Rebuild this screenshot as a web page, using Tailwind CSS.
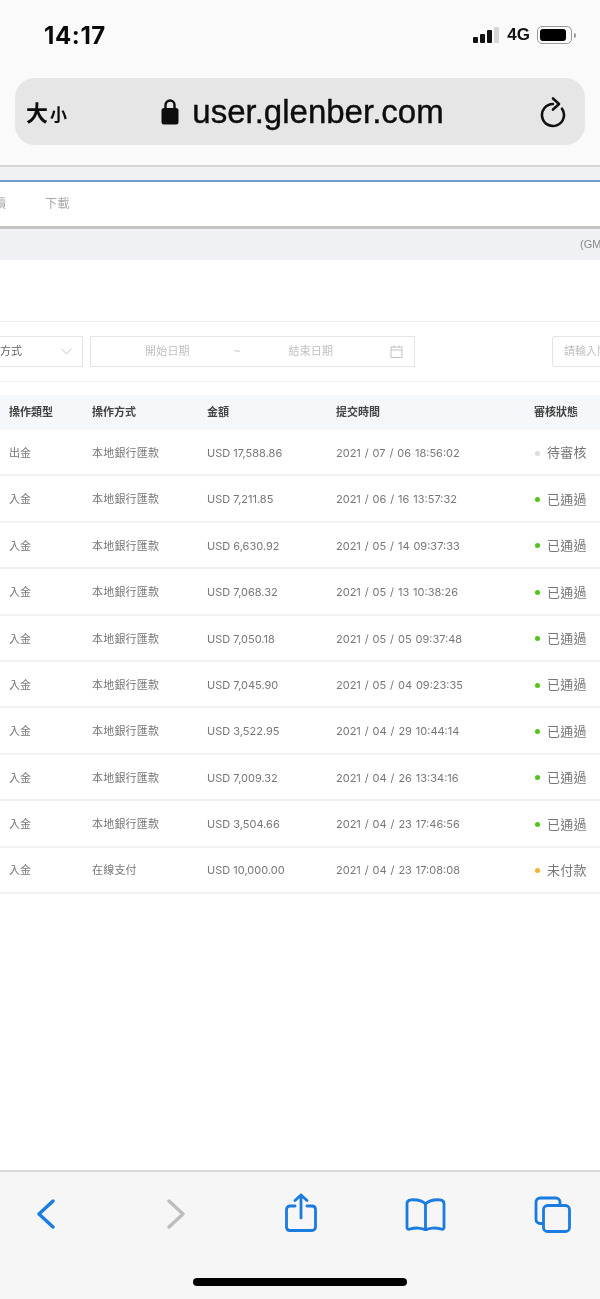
<!doctype html>
<html lang="zh-Hant"><head><meta charset="utf-8"><script src="https://cdn.jsdelivr.net/npm/@tailwindcss/browser@4"></script></head>
<body class="m-0 bg-white">
<div class="w-[600px] h-[1299px] overflow-hidden flex flex-col bg-white blur-[0.35px] font-['Liberation_Sans','Noto_Sans_CJK_TC',sans-serif]">
  <!-- Browser chrome -->
  <div class="h-[165px] shrink-0 bg-[#fafafa] flex flex-col">
    <div class="h-[78px] flex items-start justify-between pl-[44px] pr-[24px] pt-[23px]">
      <span class="text-[24px] leading-[26px] font-bold text-[#0a0a0a] tracking-[0.6px] font-['Inter','Liberation_Sans',sans-serif]">14:17</span>
      <div class="flex items-center pt-[3px]">
        <div class="flex items-end gap-[2px] h-[16px]">
          <span class="w-[5px] h-[6px] rounded-[1px] bg-[#111]"></span>
          <span class="w-[5px] h-[9px] rounded-[1px] bg-[#111]"></span>
          <span class="w-[5px] h-[13px] rounded-[1px] bg-[#111]"></span>
          <span class="w-[5px] h-[16px] rounded-[1px] bg-[#d6d6d6]"></span>
        </div>
        <span class="ml-[8px] text-[17px] leading-[18px] font-bold text-[#111]">4G</span>
        <div class="ml-[7px] flex items-center gap-[2px]">
          <div class="w-[35px] h-[18px] rounded-[5px] border border-[#9a9a9a] p-[2px]"><div class="w-[26px] h-full rounded-[3px] bg-black"></div></div>
          <span class="w-[2px] h-[5px] rounded-r-[2px] bg-[#9a9a9a]"></span>
        </div>
      </div>
    </div>
    <div class="mx-[15px] h-[67px] rounded-[20px] bg-[#e6e6e6] flex items-center relative">
      <div class="absolute left-[11px] top-[18px] flex items-baseline text-[#0d0d0d] font-bold font-['Noto_Sans_CJK_TC',sans-serif]">
        <span class="text-[22px] leading-[30px]">大</span><span class="text-[17px] leading-[30px] ml-[2px]">小</span>
      </div>
      <div class="w-full flex items-center justify-center gap-[13px] pl-[5px]">
        <svg width="18" height="27" viewBox="0 0 18 27"><path d="M4.500 11V7a4.500 4.500 0 0 1 9 0v4" fill="none" stroke="#0d0d0d" stroke-width="2.400"/><rect x="0.500" y="10" width="17" height="16.500" rx="2.500" fill="#0d0d0d"/></svg>
        <span class="text-[33px] leading-[38px] text-[#0d0d0d] [-webkit-text-stroke:0.4px_#0d0d0d]">user.glenber.com</span>
      </div>
      <svg class="absolute right-[19px] top-[18px]" width="26" height="32" viewBox="0 0 26 32" fill="none" stroke="#111" stroke-width="2.600" stroke-linecap="round" stroke-linejoin="round"><path d="M13 8A11 11 0 1 0 22 12.700"/><path d="M13 2.500l6 5.500-6 5.500"/></svg>
    </div>
  </div>
  <div class="h-[2px] shrink-0 bg-[#d6d6d6]"></div>
  <div class="h-[13px] shrink-0 bg-[#f0f1f5]"></div>
  <div class="h-[2px] shrink-0 bg-[#6f9fc8]"></div>
  <!-- Site nav -->
  <div class="h-[44px] shrink-0 bg-white flex items-center text-[12px] text-[#a8a8a8]">
    <span class="ml-[-6px]">贖</span><span class="ml-[39px] tracking-[0.5px]">下載</span>
  </div>
  <div class="h-[3px] shrink-0 bg-[#c4c4c4]"></div>
  <div class="h-[31px] shrink-0 bg-[#f0f1f5] flex items-center justify-end text-[11px] text-[#888] overflow-hidden">
    <span class="w-[20px] whitespace-nowrap">(GMT</span>
  </div>
  <!-- Filters -->
  <div class="h-[61px] shrink-0 bg-white"></div>
  <div class="h-[61px] shrink-0 border-y border-[#efefef] flex items-center">
    <div class="w-[83px] shrink-0 h-[31px] border border-l-0 border-[#e4e4e4] flex items-center justify-between pr-[10px] text-[11px] text-[#666]">
      <span>方式</span>
      <svg width="11" height="7" viewBox="0 0 11 7" fill="none" stroke="#c8c8c8" stroke-width="1"><path d="M0.500 0.500L5.500 6l5-5.500"/></svg>
    </div>
    <div class="ml-[7px] w-[325px] shrink-0 h-[31px] border border-[#e4e4e4] flex items-center text-[11px] text-[#c0c0c0] tracking-[0.2px]">
      <span class="ml-[54px]">開始日期</span>
      <span class="ml-[44px]">~</span>
      <span class="ml-[48px]">結束日期</span>
      <svg class="ml-[57px]" width="13" height="13" viewBox="0 0 13 13" fill="none" stroke="#c4c4c4" stroke-width="1"><rect x="1" y="2" width="11" height="10.500"/><path d="M1 5h11M4 0.500v2.500M9 0.500v2.500"/></svg>
    </div>
    <div class="ml-[137px] w-[60px] shrink-0 h-[31px] border border-[#e4e4e4] rounded-l-[2px] flex items-center pl-[11px] text-[11px] text-[#c0c0c0] whitespace-nowrap">請輸入關鍵字</div>
  </div>
  <!-- Table -->
  <div class="h-[13px] shrink-0"></div>
  <div class="h-[35px] shrink-0 bg-[#f5f8fa] grid grid-cols-[83px_115px_129px_198px_1fr] pl-[9px] items-center text-[11px] font-bold text-[#444]">
    <span>操作類型</span><span>操作方式</span><span>金額</span><span>提交時間</span><span>審核狀態</span>
  </div>
  <div class="text-[11px] text-[#777]">
    <div class="h-[46.4px] pt-[2px] border-b-2 border-[#f2f2f2] grid grid-cols-[83px_115px_129px_198px_1fr] pl-[9px] items-center"><span>出金</span><span class="tracking-[0.2px]">本地銀行匯款</span><span class="font-['Inter','Liberation_Sans',sans-serif]">USD 17,588.86</span><span class="[word-spacing:0.8px] font-['Inter','Liberation_Sans',sans-serif]">2021 / 07 / 06 18:56:02</span><span class="flex items-center text-[13px] tracking-[0.3px]"><i class="w-[5px] h-[5px] rounded-full bg-[#dddddd] ml-[1px] mr-[7px]"></i>待審核</span></div>
    <div class="h-[46.4px] pt-[2px] border-b-2 border-[#f2f2f2] grid grid-cols-[83px_115px_129px_198px_1fr] pl-[9px] items-center"><span>入金</span><span class="tracking-[0.2px]">本地銀行匯款</span><span class="font-['Inter','Liberation_Sans',sans-serif]">USD 7,211.85</span><span class="[word-spacing:0.8px] font-['Inter','Liberation_Sans',sans-serif]">2021 / 06 / 16 13:57:32</span><span class="flex items-center text-[13px] tracking-[0.3px]"><i class="w-[5px] h-[5px] rounded-full bg-[#52c41a] ml-[1px] mr-[7px]"></i>已通過</span></div>
    <div class="h-[46.4px] pt-[2px] border-b-2 border-[#f2f2f2] grid grid-cols-[83px_115px_129px_198px_1fr] pl-[9px] items-center"><span>入金</span><span class="tracking-[0.2px]">本地銀行匯款</span><span class="font-['Inter','Liberation_Sans',sans-serif]">USD 6,630.92</span><span class="[word-spacing:0.8px] font-['Inter','Liberation_Sans',sans-serif]">2021 / 05 / 14 09:37:33</span><span class="flex items-center text-[13px] tracking-[0.3px]"><i class="w-[5px] h-[5px] rounded-full bg-[#52c41a] ml-[1px] mr-[7px]"></i>已通過</span></div>
    <div class="h-[46.4px] pt-[2px] border-b-2 border-[#f2f2f2] grid grid-cols-[83px_115px_129px_198px_1fr] pl-[9px] items-center"><span>入金</span><span class="tracking-[0.2px]">本地銀行匯款</span><span class="font-['Inter','Liberation_Sans',sans-serif]">USD 7,068.32</span><span class="[word-spacing:0.8px] font-['Inter','Liberation_Sans',sans-serif]">2021 / 05 / 13 10:38:26</span><span class="flex items-center text-[13px] tracking-[0.3px]"><i class="w-[5px] h-[5px] rounded-full bg-[#52c41a] ml-[1px] mr-[7px]"></i>已通過</span></div>
    <div class="h-[46.4px] pt-[2px] border-b-2 border-[#f2f2f2] grid grid-cols-[83px_115px_129px_198px_1fr] pl-[9px] items-center"><span>入金</span><span class="tracking-[0.2px]">本地銀行匯款</span><span class="font-['Inter','Liberation_Sans',sans-serif]">USD 7,050.18</span><span class="[word-spacing:0.8px] font-['Inter','Liberation_Sans',sans-serif]">2021 / 05 / 05 09:37:48</span><span class="flex items-center text-[13px] tracking-[0.3px]"><i class="w-[5px] h-[5px] rounded-full bg-[#52c41a] ml-[1px] mr-[7px]"></i>已通過</span></div>
    <div class="h-[46.4px] pt-[2px] border-b-2 border-[#f2f2f2] grid grid-cols-[83px_115px_129px_198px_1fr] pl-[9px] items-center"><span>入金</span><span class="tracking-[0.2px]">本地銀行匯款</span><span class="font-['Inter','Liberation_Sans',sans-serif]">USD 7,045.90</span><span class="[word-spacing:0.8px] font-['Inter','Liberation_Sans',sans-serif]">2021 / 05 / 04 09:23:35</span><span class="flex items-center text-[13px] tracking-[0.3px]"><i class="w-[5px] h-[5px] rounded-full bg-[#52c41a] ml-[1px] mr-[7px]"></i>已通過</span></div>
    <div class="h-[46.4px] pt-[2px] border-b-2 border-[#f2f2f2] grid grid-cols-[83px_115px_129px_198px_1fr] pl-[9px] items-center"><span>入金</span><span class="tracking-[0.2px]">本地銀行匯款</span><span class="font-['Inter','Liberation_Sans',sans-serif]">USD 3,522.95</span><span class="[word-spacing:0.8px] font-['Inter','Liberation_Sans',sans-serif]">2021 / 04 / 29 10:44:14</span><span class="flex items-center text-[13px] tracking-[0.3px]"><i class="w-[5px] h-[5px] rounded-full bg-[#52c41a] ml-[1px] mr-[7px]"></i>已通過</span></div>
    <div class="h-[46.4px] pt-[2px] border-b-2 border-[#f2f2f2] grid grid-cols-[83px_115px_129px_198px_1fr] pl-[9px] items-center"><span>入金</span><span class="tracking-[0.2px]">本地銀行匯款</span><span class="font-['Inter','Liberation_Sans',sans-serif]">USD 7,009.32</span><span class="[word-spacing:0.8px] font-['Inter','Liberation_Sans',sans-serif]">2021 / 04 / 26 13:34:16</span><span class="flex items-center text-[13px] tracking-[0.3px]"><i class="w-[5px] h-[5px] rounded-full bg-[#52c41a] ml-[1px] mr-[7px]"></i>已通過</span></div>
    <div class="h-[46.4px] pt-[2px] border-b-2 border-[#f2f2f2] grid grid-cols-[83px_115px_129px_198px_1fr] pl-[9px] items-center"><span>入金</span><span class="tracking-[0.2px]">本地銀行匯款</span><span class="font-['Inter','Liberation_Sans',sans-serif]">USD 3,504.66</span><span class="[word-spacing:0.8px] font-['Inter','Liberation_Sans',sans-serif]">2021 / 04 / 23 17:46:56</span><span class="flex items-center text-[13px] tracking-[0.3px]"><i class="w-[5px] h-[5px] rounded-full bg-[#52c41a] ml-[1px] mr-[7px]"></i>已通過</span></div>
    <div class="h-[46.4px] pt-[2px] border-b-2 border-[#f2f2f2] grid grid-cols-[83px_115px_129px_198px_1fr] pl-[9px] items-center"><span>入金</span><span class="tracking-[0.2px]">在線支付</span><span class="font-['Inter','Liberation_Sans',sans-serif]">USD 10,000.00</span><span class="[word-spacing:0.8px] font-['Inter','Liberation_Sans',sans-serif]">2021 / 04 / 23 17:08:08</span><span class="flex items-center text-[13px] tracking-[0.3px]"><i class="w-[5px] h-[5px] rounded-full bg-[#f5b335] ml-[1px] mr-[7px]"></i>未付款</span></div>
  </div>
  <!-- Safari toolbar -->
  <div class="mt-auto h-[129px] shrink-0 bg-[#f6f6f6] border-t-2 border-[#d9d9d9]">
    <div class="flex items-start h-[70px] pt-[27px]">
      <svg class="ml-[37px]" width="18" height="30" viewBox="0 0 18 30" fill="none" stroke="#1a7be0" stroke-width="3.400" stroke-linecap="round" stroke-linejoin="round"><path d="M16 2L2 15l14 13"/></svg>
      <svg class="ml-[112px]" width="18" height="30" viewBox="0 0 18 30" fill="none" stroke="#bdbdbd" stroke-width="3.400" stroke-linecap="round" stroke-linejoin="round"><path d="M2 2l14 13L2 28"/></svg>
      <svg class="ml-[100px] mt-[-6px]" width="32" height="39" viewBox="0 0 32 39" fill="none" stroke="#1a7be0" stroke-width="2.800" stroke-linecap="round" stroke-linejoin="round"><path d="M10 13H5a3.500 3.500 0 0 0-3.500 3.500v18A3.500 3.500 0 0 0 5 37.500h22a3.500 3.500 0 0 0 3.500-3.500v-18A3.500 3.500 0 0 0 27 13h-5"/><path d="M16 25V2M10 7.500L16 2l6 5.500"/></svg>
      <svg class="ml-[88px] mt-[-1px]" width="41" height="33" viewBox="0 0 41 33" fill="none" stroke="#1a7be0" stroke-width="2.800" stroke-linecap="round" stroke-linejoin="round"><path d="M20.500 6C18 3 13 1.500 6 1.800 3.500 2 2 3 2 5.500v24c0 1.500 1 2 2.500 1.700C10 29.500 17 29.500 20.500 32c3.500-2.500 10.500-2.500 16-.8 1.500.3 2.500-.2 2.500-1.700v-24C39 3 37.500 2 35 1.800 28 1.500 23 3 20.500 6z"/><path d="M20.500 6v26"/></svg>
      <svg class="ml-[88px] mt-[-3px]" width="37" height="37" viewBox="0 0 37 37" fill="none" stroke="#1a7be0" stroke-width="2.800" stroke-linecap="round" stroke-linejoin="round"><path d="M9 27.500H6A4 4 0 0 1 2 23.500V6A4 4 0 0 1 6 2h16a4 4 0 0 1 4 4v3"/><rect x="9.500" y="9.500" width="26" height="26" rx="4"/></svg>
    </div>
    <div class="mx-auto mt-[36px] w-[214px] h-[8px] rounded-full bg-black"></div>
  </div>
</div>
</body></html>
